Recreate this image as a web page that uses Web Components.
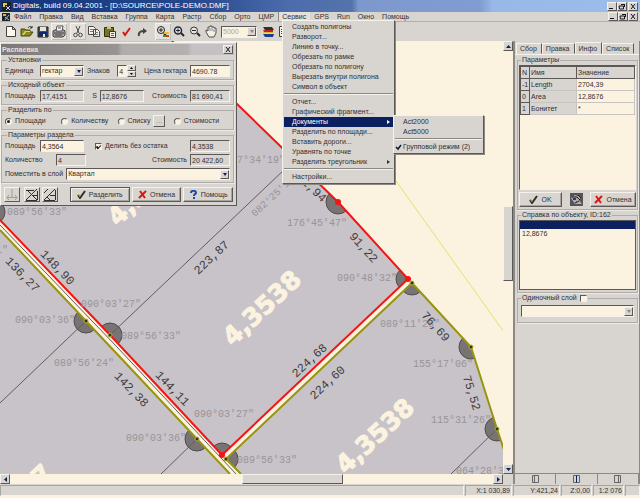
<!DOCTYPE html>
<html lang="ru">
<head>
<meta charset="utf-8">
<title>Digitals</title>
<style>
    :root {
        --face: #d8d4d0;
        --paper: #fbf3e0;
        --shade: #8c8884;
        --dark: #5c5858;
        --light: #f6f2ea;
        --navy: #0a2060;
        --ink: #303030;
    }
    body {
        margin: 0;
        height: 100vh;
        display: flex;
        flex-direction: column;
        overflow: hidden;
        background: var(--face);
        color: var(--ink);
        font: 7px/10px "Liberation Sans", Arial, sans-serif;
    }
    main {
        flex: 1;
        display: flex;
        min-height: 0;
    }
</style>
</head>
<body>

<template id="template-title-bar">
    <style>
        :host {
            display: flex;
            align-items: center;
            gap: 2px;
            height: 12px;
            padding: 0 2px;
            color: #fff;
            background: linear-gradient(90deg, #14347c 0, #24488c 30%, #4c6cac 45%, #5474ac 55%, #7c98cc 56%, #809cd0 75%, #98b8e8 77%, #9cbcec 100%);
        }
        h1 {
            flex: 1;
            margin: 0;
            font-size: 8px;
            font-weight: normal;
            white-space: nowrap;
        }
        svg { display: block; }
        div { display: flex; }
        .last { margin-left: 1px; }
    </style>
    <svg width="9" height="9" viewBox="0 0 9 9"><path fill="#182030" d="M0 0h9v9H0z"/><path fill="#e8c840" d="M1 1h4v2H3v2H1z"/><path stroke="#c8d8f0" fill="none" d="M4 4l4 4M8 4L4 8"/></svg>
    <h1><slot></slot></h1>
    <div><caption-button kind="min"></caption-button><caption-button kind="restore"></caption-button><caption-button class="last" kind="close"></caption-button></div>
</template>

<template id="template-caption-button">
    <style>
        :host { display: block; }
        button {
            display: block;
            width: 10px;
            height: 9px;
            padding: 0;
            border: 1px solid;
            border-color: var(--light) var(--dark) var(--dark) var(--light);
            background: var(--face);
        }
        svg { display: block; width: 8px; height: 7px; }
        path { fill: none; stroke: #101828; }
    </style>
    <button type="button"><svg viewBox="0 0 8 7"><path/></svg></button>
</template>

<template id="template-menu-bar">
    <style>
        :host {
            display: flex;
            align-items: center;
            height: 9px;
            padding: 0 2px;
            white-space: nowrap;
        }
        svg { display: block; }
        nav { flex: 1; display: flex; }
        button {
            height: 9px;
            padding: 0 4px;
            border: 0;
            background: none;
            color: inherit;
            font: inherit;
            line-height: 9px;
        }
        button.open {
            background: #e4e0da;
            box-shadow: inset 1px 0 var(--shade);
        }
        .windows { display: flex; }
    </style>
    <svg width="8" height="8" viewBox="0 0 8 8"><path fill="#202428" d="M0 0h8v8H0z"/><path fill="#d8b838" d="M1 1h3v2H1z"/><path stroke="#a8b8d8" fill="none" d="M3 4l4 3M7 2L3 7"/></svg>
    <nav></nav>
    <div class="windows"><caption-button kind="min"></caption-button><caption-button kind="restore"></caption-button><caption-button kind="close"></caption-button></div>
</template>

<template id="template-tool-bar">
    <style>
        :host {
            display: flex;
            align-items: center;
            height: 19px;
            padding-left: 3px;
            border-top: 1px solid #b4b0ac;
        }
        button {
            width: 16px;
            height: 17px;
            padding: 0;
            border: 0;
            background: none;
        }
        button.raised {
            background: #e4e0dc;
            box-shadow: inset 1px 1px var(--light), inset -1px -1px #c0bcb8;
        }
        svg { display: block; margin: auto; width: 14px; height: 13px; }
        .gap { width: 3px; }
        .wide { width: 5px; }
        combo-box { width: 36px; margin: 0 3px 0 2px; }
    </style>
    <button aria-label="Новый"><svg viewBox="0 0 14 13"><path fill="#fff8e8" stroke="#404040" d="M2.500 1.500h6l3 3v7h-9zM8.500 1.500v3h3"/></svg></button>
    <button aria-label="Открыть"><svg viewBox="0 0 14 13"><path fill="#8c8820" stroke="#484810" d="M1 11V4h4l1 1h4v2h3l-3 4z"/><path fill="#d8d860" d="M2 10l3-4h5v1H6l-2 3z"/><path fill="none" stroke="#303030" d="M8 3c1-2 3-2 4 0M12 1v2h-2"/></svg></button>
    <button aria-label="Сохранить"><svg viewBox="0 0 14 13"><path fill="#48504c" stroke="#202020" d="M2 2h10v10H2z"/><path fill="#0c2878" d="M3 7h8v4H3z"/><path fill="#e8e4dc" d="M4 2h6v4H4zM7 9h2v3H7z"/></svg></button>
    <button class="raised" aria-label="Печать"><svg viewBox="0 0 14 13"><path fill="#a8a4a0" stroke="#404040" d="M1 6l2-1h9l1 1v4l-2 2H2l-1-1z"/><path fill="#fff" stroke="#505050" d="M4 6l1-5h6l-1 5z"/><path stroke="#404040" d="M2 8h10M3 10h7M6 3h3"/></svg></button>
    <span class="gap"></span>
    <button class="raised" aria-label="Вырезать"><svg viewBox="0 0 14 13"><path fill="none" stroke="#484848" d="M5 1l3 7M9 1L6 8"/><circle cx="4.500" cy="10" r="1.800" fill="none" stroke="#484848"/><circle cx="9.500" cy="10" r="1.800" fill="none" stroke="#484848"/></svg></button>
    <button aria-label="Копировать"><svg viewBox="0 0 14 13"><path fill="#f4f0e8" stroke="#484848" d="M1.500 1.500h5l2 2v6h-7zM6.500 4.500h4l2 2v5h-6z"/><path stroke="#787878" d="M3 4.500h3M3 6.500h3M8 7.500h3M8 9.500h3"/></svg></button>
    <button aria-label="Вставить"><svg viewBox="0 0 14 13"><path fill="#787420" stroke="#303010" d="M1.500 2.500h9v9h-9z"/><path fill="#c8c4a0" d="M4 1h4v3H4z"/><path fill="#f4f0e8" stroke="#383838" d="M6.500 6.500h6v6h-6z"/><path stroke="#606060" d="M8 8.500h3M8 10.500h3"/></svg></button>
    <button aria-label="Применить"><svg viewBox="0 0 14 13"><path fill="none" stroke="#d81818" stroke-width="2" d="M4 7l2 3 5-7"/></svg></button>
    <button aria-label="Отменить"><svg viewBox="0 0 14 13"><path fill="none" stroke="#484848" stroke-width="2" d="M4 11C3 7 6 6 9 6"/><path fill="#404040" d="M8 3l4 3-4 3z"/></svg></button>
    <span class="wide"></span>
    <button class="raised" aria-label="Масштаб"><svg viewBox="0 0 14 13"><circle cx="5" cy="5" r="3.500" fill="#e8e4dc" stroke="#202020"/><path stroke="#202020" stroke-width="2" d="M8 8l2 3"/><path stroke="#202020" d="M3 5h4M5 3v4"/><path fill="#e8c030" d="M8 7h5v2H8z"/><path fill="#c84020" d="M10 10h3v2h-3z"/><path fill="#409030" d="M7 10h3v2H7z"/></svg></button>
    <button aria-label="Увеличить"><svg viewBox="0 0 14 13"><circle cx="6" cy="5.500" r="3.500" fill="#e8e4dc" stroke="#202838" stroke-width="1.500"/><path stroke="#202838" stroke-width="2" d="M9 8l3 3"/><path stroke="#202838" d="M4 5.500h4M6 3.500v4"/></svg></button>
    <button aria-label="Уменьшить"><svg viewBox="0 0 14 13"><circle cx="6" cy="5.500" r="3.500" fill="#e8e4dc" stroke="#383838"/><path stroke="#282828" stroke-width="2" d="M9 8l3 3"/><path stroke="#282828" d="M4 5.500h4"/></svg></button>
    <button aria-label="Рука"><svg viewBox="0 0 14 13"><path fill="#f4f0e8" stroke="#505050" d="M5 12L2 7V5l2 1V2h2V1h2v1h2v1h2v5l-2 4z"/><path stroke="#888" d="M6 3v3M8 2v4M10 4v3"/></svg></button>
    <combo-box options="5000" dim></combo-box>
    <button aria-label="Слои"><svg viewBox="0 0 14 13"><path fill="#303030" d="M2 2h9l2 3H4z"/><path fill="#b82820" d="M2 5h10v2H3z"/><path fill="#e0b830" d="M2 7h10v1H3z"/><path fill="#1c3c90" d="M2 9h11l-1 3H4z"/></svg></button>
    <button aria-label="Таблица"><svg viewBox="0 0 14 13"><path fill="#f4f0e8" stroke="#404040" d="M2.500 1.500h10v10h-10z"/><path stroke="#404040" d="M4 4.500h6M4 6.500h6M4 8.500h6"/></svg></button>
</template>

<template id="template-combo-box">
    <style>
        :host { display: grid; align-items: stretch; min-width: 0; }
        select, i { grid-area: 1 / 1; }
        select {
            appearance: none;
            width: 100%;
            min-width: 0;
            height: 12px;
            padding: 0 0 0 1px;
            border: 1px solid;
            border-color: var(--dark) var(--light) var(--light) var(--dark);
            border-radius: 0;
            background: var(--paper);
            color: inherit;
            font: inherit;
        }
        :host([dim]) select { color: #a8a49c; }
        i {
            justify-self: end;
            align-self: center;
            display: grid;
            place-items: center;
            width: 9px;
            height: 9px;
            margin-right: 1px;
            box-sizing: border-box;
            border: 1px solid;
            border-color: var(--light) var(--dark) var(--dark) var(--light);
            background: var(--face);
            pointer-events: none;
        }
        i::after {
            content: "";
            border: 2px solid transparent;
            border-top: 3px solid var(--navy);
            border-bottom: 0;
        }
        :host([dim]) i::after { border-top-color: var(--shade); }
    </style>
    <select></select><i></i>
</template>

<template id="template-push-button">
    <style>
        :host { display: block; }
        button {
            display: flex;
            align-items: center;
            justify-content: center;
            gap: 3px;
            width: 100%;
            height: 15px;
            padding: 0;
            border: 1px solid;
            border-color: var(--light) var(--dark) var(--dark) var(--light);
            background: var(--face);
            box-shadow: inset -1px -1px #a8a4a0;
            color: inherit;
            font: inherit;
            white-space: nowrap;
        }
        :host([default]) button { border-color: var(--dark); box-shadow: inset 1px 1px var(--light), inset -1px -1px #a8a4a0; }
        svg { display: block; width: 9px; height: 9px; }
    </style>
    <button type="button"><svg viewBox="0 0 9 9"></svg><slot></slot></button>
</template>

<template id="template-group-box">
    <style>
        :host { display: block; }
        fieldset {
            display: block;
            min-width: 0;
            margin: 0;
            padding: 1px var(--group-pad, 3px) 2px;
            border: 1px solid #b0acac;
            box-shadow: 1px 1px #ece8e2;
        }
        legend {
            margin: 0 0 0 2px;
            padding: 0 1px;
            line-height: 8px;
        }
    </style>
    <fieldset><legend><slot name="legend"></slot></legend><slot></slot></fieldset>
</template>

<template id="template-parcel-dialog">
    <style>
        :host {
            display: flex;
            flex-direction: column;
            gap: 1px;
            box-sizing: border-box;
            padding: 1px 2px 3px 0;
            background: var(--face);
            border: 1px solid;
            border-color: var(--light) var(--dark) var(--dark) var(--light);
        }
        header {
            display: flex;
            align-items: center;
            height: 11px;
            padding: 0 1px;
            color: #e4e0dc;
            background: linear-gradient(90deg, #7c7878 0, #989494 50%, #b0acac 52%, #b4b0b0 80%, #c4c0c4 82%);
        }
        h2 { flex: 1; margin: 0; font-size: 7px; }
        .row { display: flex; align-items: center; gap: 3px; height: 12px; white-space: nowrap; }
        .row + .row { margin-top: 2px; }
        .end { margin-left: auto; }
        .lead { width: 32px; }
        input[type=text], input[type=number] {
            box-sizing: border-box;
            width: 40px;
            height: 12px;
            padding: 0 1px;
            border: 1px solid;
            border-color: var(--dark) var(--light) var(--light) var(--dark);
            border-radius: 0;
            background: var(--paper);
            color: inherit;
            font: inherit;
        }
        input[readonly] { background: var(--face) !important; }
        input.mid { width: 44px; }
        input.small { width: 30px; }
        .count { width: 48px; }
        .spin { display: flex; align-items: center; }
        input[type=number] { width: 10px; appearance: textfield; }
        input::-webkit-inner-spin-button { display: none; }
        .arrows { display: grid; }
        .arrows button {
            display: grid;
            place-items: center;
            width: 9px;
            height: 6px;
            padding: 0;
            border: 1px solid;
            border-color: var(--light) var(--dark) var(--dark) var(--light);
            background: var(--face);
        }
        .arrows svg { display: block; width: 3px; height: 2px; }
        .unit { width: 44px; }
        .layer { flex: 1; }
        .choice { display: flex; align-items: center; gap: 3px; }
        .whole { margin-left: 8px; }
        .radios { display: grid; grid-template-columns: repeat(4, 1fr); gap: 0; }
        input[type=radio], input[type=checkbox] {
            appearance: none;
            display: grid;
            place-items: center;
            width: 7px;
            height: 7px;
            margin: 0;
            border: 1px solid;
            border-color: var(--dark) var(--light) var(--light) var(--dark);
            background: var(--paper);
            box-sizing: border-box;
        }
        input[type=radio] { border-radius: 50%; }
        input[type=radio]:checked::after { content: ""; width: 3px; height: 3px; border-radius: 50%; background: #202020; }
        input[type=checkbox]:checked::after { content: ""; width: 3px; height: 2px; border: solid #202020; border-width: 0 0 1px 2px; transform: rotate(-45deg); }
        .more { width: 12px; height: 12px; padding: 0; border: 1px solid; border-color: var(--light) var(--dark) var(--dark) var(--light); background: var(--face); color: var(--shade); font: inherit; line-height: 6px; }
        footer { display: flex; gap: 2px; padding: 3px 1px 0 3px; }
        footer .tool { width: 16px; height: 15px; padding: 0; border: 1px solid; border-color: var(--light) var(--dark) var(--dark) var(--light); background: var(--face); }
        footer .tool svg { display: block; width: 14px; height: 13px; }
        footer .first { margin-right: 2px; }
        .main { flex: 6; margin-left: 10px; }
        .side { flex: 5; }
    </style>
    <header><h2>Распаевка</h2><caption-button kind="close"></caption-button></header>
    <group-box>
        <span slot="legend">Установки</span>
        <div class="row">
            <span class="lead">Единица</span>
            <combo-box class="unit" options="гектар"></combo-box>
            <label for="digits">Знаков</label>
            <span class="spin end"><input type="number" id="digits" value="4"><span class="arrows"><button type="button" aria-label="Больше"><svg viewBox="0 0 3 2"><path d="M0 2h3L1.500 0z"/></svg></button><button type="button" aria-label="Меньше"><svg viewBox="0 0 3 2"><path d="M0 0h3L1.500 2z"/></svg></button></span></span>
            <label class="end" for="price">Цена гектара</label>
            <input type="text" id="price" value="4690.78">
        </div>
    </group-box>
    <group-box>
        <span slot="legend">Исходный объект</span>
        <div class="row">
            <label class="lead" for="area">Площадь</label>
            <input type="text" class="mid" id="area" value="17,4151" readonly>
            <label class="end" for="s">S</label>
            <input type="text" class="mid" id="s" value="12,8676" readonly>
            <label class="end" for="cost">Стоимость</label>
            <input type="text" id="cost" value="81 690,41" readonly>
        </div>
    </group-box>
    <group-box>
        <span slot="legend">Разделить по</span>
        <div class="row radios">
            <label class="choice"><input type="radio" name="by" checked>Площади</label>
            <label class="choice"><input type="radio" name="by">Количеству</label>
            <span class="choice"><label class="choice"><input type="radio" name="by">Списку</label><button type="button" class="more">...</button></span>
            <label class="choice"><input type="radio" name="by">Стоимости</label>
        </div>
    </group-box>
    <group-box>
        <span slot="legend">Параметры раздела</span>
        <div class="row">
            <label class="lead" for="part">Площадь</label>
            <input type="text" class="mid" id="part" value="4,3564">
            <label class="choice whole"><input type="checkbox" checked>Делить без остатка</label>
            <input type="text" class="end" value="4,3538" aria-label="Площадь участка" readonly>
        </div>
        <div class="row">
            <label class="count" for="count">Количество</label>
            <input type="text" class="small" id="count" value="4" readonly>
            <label class="end" for="total">Стоимость</label>
            <input type="text" id="total" value="20 422,60" readonly>
        </div>
        <div class="row">
            <span>Поместить в слой</span>
            <combo-box class="layer" options="Квартал"></combo-box>
        </div>
    </group-box>
    <footer>
        <button type="button" class="tool first" aria-label="Точка"><svg viewBox="0 0 14 13"><path fill="none" stroke="#a09c98" d="M7 1v8M2 9.500h10M4 7L2 9.500 4 12M10 7l2 2.500-2 2.500"/></svg></button>
        <button type="button" class="tool" aria-label="Сетка"><svg viewBox="0 0 14 13"><path fill="none" stroke="#303030" d="M1 2.500h8M1 12L12 1M3 3l9 9M12.500 3v9M7 7.500h5M1 12.500h11"/></svg></button>
        <button type="button" class="tool" aria-label="Полосы"><svg viewBox="0 0 14 13"><path fill="none" stroke="#303030" d="M1 5l4-4M1 12L12 1M12.500 2v10M7 7.500h5M4 9l3 3M1 12.500h11"/></svg></button>
        <push-button class="main" icon="check" default>Разделить</push-button>
        <push-button class="side" icon="cross">Отмена</push-button>
        <push-button class="side" icon="help">Помощь</push-button>
    </footer>
</template>

<template id="template-drop-menu">
    <style>
        :host {
            display: block;
            box-sizing: border-box;
            padding: 1px;
            background: var(--face);
            border: 1px solid;
            border-color: var(--light) var(--dark) var(--dark) var(--light);
            box-shadow: 1px 1px var(--shade);
            white-space: nowrap;
        }
    </style>
    <slot></slot>
</template>

<template id="template-menu-item">
    <style>
        :host { display: block; position: relative; }
        button {
            display: flex;
            align-items: center;
            width: 100%;
            height: 10px;
            padding: 0 3px 0 0;
            border: 0;
            background: none;
            color: inherit;
            font: inherit;
            text-align: left;
        }
        :host([active]) button { background: var(--navy); color: #fff; }
        svg { display: block; width: 8px; height: 7px; visibility: hidden; fill: none; stroke: #101828; }
        span { flex: 1; }
        :host([checked]) svg { visibility: visible; }
        b { display: none; border: 2px solid transparent; border-left: 3px solid currentColor; border-right: 0; }
        :host([more]) b { display: block; }
        ::slotted(drop-menu) { position: absolute; left: 100%; top: -2px; width: 91px; color: var(--ink); }
    </style>
    <button type="button"><svg viewBox="0 0 8 7"><path stroke-width="1.500" d="M1 3l2 2 3-4"/></svg><span></span><b></b></button>
    <slot></slot>
</template>

<template id="template-menu-line">
    <style>
        :host { display: block; height: 5px; padding-top: 1px; box-sizing: border-box; }
        hr { margin: 0; border: 0; border-top: 1px solid var(--shade); border-bottom: 1px solid var(--light); }
    </style>
    <hr>
</template>

<template id="template-scroll-strip">
    <style>
        :host { display: flex; background: var(--paper); }
        :host([vertical]) { flex-direction: column; }
        button {
            flex: none;
            display: grid;
            place-items: center;
            width: 10px;
            height: 10px;
            padding: 0;
            border: 1px solid;
            border-color: var(--light) var(--dark) var(--dark) var(--light);
            background: var(--face);
        }
        svg { width: 5px; height: 5px; fill: var(--navy); }
        .thumb {
            box-sizing: border-box;
            border: 1px solid;
            border-color: var(--light) var(--dark) var(--dark) var(--light);
            background: var(--face);
        }
    </style>
    <button type="button" aria-label="Назад"><svg viewBox="0 0 5 5"><path/></svg></button>
    <span class="before"></span><span class="thumb"></span><span class="after"></span>
    <button type="button" aria-label="Вперёд"><svg viewBox="0 0 5 5"><path/></svg></button>
</template>

<template id="template-parcel-map">
    <style>
        :host { display: block; overflow: hidden; background: var(--paper); }
        svg { display: block; width: 100%; height: 100%; }
        .ground { fill: #c8c3c8; }
        .fan { fill: #787474; stroke: #504c50; }
        .road { fill: var(--paper); }
        .edge { fill: none; stroke: #989410; stroke-width: 2; }
        .chosen { fill: none; stroke: #f41414; stroke-width: 2; }
        .thin { fill: none; stroke: #605c60; }
        .length { font: 12px "Liberation Mono", monospace; fill: #403c40; text-anchor: middle; dominant-baseline: central; }
        .angle { font: 10px "Liberation Mono", monospace; fill: #989498; }
        .area { font: bold 25px "DejaVu Sans", sans-serif; fill: var(--paper); stroke: var(--paper); text-anchor: middle; dominant-baseline: central; }
    </style>
    <svg>
        <defs>
            <clipPath id="upper"><path d="M0 41H172L338 202 408 279 222 455 110 335 0 220z"/></clipPath>
            <clipPath id="right"><path d="M412 283L471 347 497 429 510 474H241L226 459z"/></clipPath>
            <clipPath id="left"><path d="M0 230L86 321 197 439 230 474H0z"/></clipPath>
        </defs>
        <!-- the drawing keeps window coordinates, the bars above take 41px -->
        <g transform="translate(0 -41)">
            <path class="ground" d="M0 41H172L338 202 412 283 471 347 497 429 510 474V900H0z"/>
            <g class="fans"></g>
            <path class="thin" d="M110 335L286 168M86 321L0 403M197 439L161 474M497 429L451 474"/>
            <path class="road" d="M0 220L110 335 222 455 408 279 412 283 226 459 241 474H230L197 439 86 321 0 230z"/>
            <path class="thin" d="M0 225L117 347 236 474"/>
            <path class="edge" d="M0 230L86 321 197 439 230 474M241 474L226 459 412 283 471 347 497 429 504 450"/>
            <path class="chosen" d="M172 41L338 202 408 279 222 455 110 335 0 220"/>
            <path fill="none" stroke="#e4e070" d="M396 181L504 332"/>
            <g class="nodes"></g>
            <g class="labels"></g>
        </g>
    </svg>
</template>

<template id="template-map-pane">
    <style>
        :host {
            flex: 1;
            position: relative;
            display: grid;
            grid-template: minmax(0, 1fr) 10px / minmax(0, 1fr) 10px;
            min-width: 0;
            border-right: 2px solid var(--shade);
        }
    </style>
    <parcel-map></parcel-map>
    <scroll-strip vertical before="156" thumb="73" after="184"></scroll-strip>
    <scroll-strip before="233" thumb="99" after="151"></scroll-strip>
    <slot></slot>
</template>

<template id="template-side-panel">
    <style>
        :host {
            flex: none;
            width: 125px;
            box-sizing: border-box;
            display: flex;
            flex-direction: column;
            border-right: 1px solid var(--shade);
            --group-pad: 1px;
        }
        nav { display: flex; align-items: flex-end; height: 13px; padding-left: 1px; }
        nav button {
            height: 11px;
            padding: 0 4px 0 3px;
            border: 1px solid;
            border-color: var(--light) var(--dark) transparent var(--light);
            background: var(--face);
            color: inherit;
            font: inherit;
            line-height: 9px;
        }
        nav button.on { height: 12px; }
        .page { flex: 1; padding: 1px 1px 0 2px; border-top: 1px solid var(--light); }
        group-box + group-box { margin-top: 1px; }
        .grid { height: 123px; border: 1px solid; border-color: var(--dark) var(--light) var(--light) var(--dark); background: var(--paper); }
        table { width: 100%; border-collapse: collapse; table-layout: fixed; }
        th, td {
            height: 11px;
            padding: 0 0 0 1px;
            border: 1px solid #c8c4c4;
            text-align: left;
            font-weight: normal;
            line-height: 11px;
            white-space: nowrap;
        }
        th { background: var(--face); }
        thead th, tbody th:first-child { border-color: var(--dark); }
        .n { width: 7px; }
        .name { width: 45px; }
        .buttons { display: flex; align-items: center; justify-content: space-between; margin-top: 2px; }
        .ok { width: 43px; }
        .no { width: 46px; }
        .pic { width: 13px; height: 13px; padding: 0; border: 0; }
        .pic svg { display: block; }
        ul { height: 68px; margin: 0; padding: 0; list-style: none; border: 1px solid; border-color: var(--dark); background: var(--paper); }
        li { height: 8px; padding: 0 2px; line-height: 8px; }
        li + li { height: 10px; line-height: 10px; }
        li.on { background: var(--navy); }
        .single { display: flex; align-items: center; gap: 3px; line-height: 8px; }
        .single input { appearance: none; box-sizing: border-box; width: 7px; height: 7px; margin: 0; border: 1px solid; border-color: var(--dark) var(--light) var(--light) var(--dark); background: var(--paper); }
        .pick { margin: 2px 2px 3px; }
        footer { display: grid; grid-template-columns: repeat(3, 1fr); border-top: 1px solid var(--shade); }
        footer button { height: 10px; padding: 0; border: 0; border-right: 1px solid var(--shade); background: var(--face); }
        footer svg { display: block; margin: auto; fill: none; stroke: #686464; }
    </style>
    <nav><button type="button">Сбор</button><button type="button">Правка</button><button type="button" class="on">Инфо</button><button type="button">Список</button></nav>
    <div class="page">
        <group-box>
            <span slot="legend">Параметры</span>
            <div class="grid">
                <table>
                    <thead><tr><th class="n">N</th><th class="name">Имя</th><th>Значение</th></tr></thead>
                    <tbody>
                        <tr><th>-1</th><th>Length</th><td>2704,39</td></tr>
                        <tr><th>0</th><th>Area</th><td>12,8676</td></tr>
                        <tr><th>1</th><th>Бонитет</th><td>*</td></tr>
                    </tbody>
                </table>
            </div>
            <div class="buttons">
                <push-button class="ok" icon="check">OK</push-button>
                <button type="button" class="pic" aria-label="Снимок"><svg width="13" height="13" viewBox="0 0 13 13"><path fill="#585454" d="M0 0h13v13H0z"/><path fill="#b0acac" d="M1 5l4-3 6 2-2 3 3 4H5L3 8z"/><path stroke="#181818" fill="none" d="M2 4h5l3 3M8 2l3 3M5 10l4-2"/><path fill="#1c3c90" d="M3 5h3v2H3z"/><path fill="#c83028" d="M6 8h2v1H6z"/></svg></button>
                <push-button class="no" icon="cross">Отмена</push-button>
            </div>
        </group-box>
        <group-box>
            <span slot="legend">Справка по объекту, ID:162</span>
            <ul><li class="on"></li><li>12,8676</li></ul>
        </group-box>
        <group-box>
            <label slot="legend" class="single">Одиночный слой <input type="checkbox"></label>
            <combo-box class="pick" options="" dim></combo-box>
        </group-box>
    </div>
    <footer>
        <button type="button" aria-label="Слева"><svg width="9" height="8" viewBox="0 0 9 8"><path d="M1.500.500h6v7h-6zM3.500.500v7"/></svg></button>
        <button type="button" aria-label="Центр"><svg width="9" height="8" viewBox="0 0 9 8"><path d="M1.500.500h6v7h-6z"/><path stroke="#0a2060" d="M4.500.500v7"/></svg></button>
        <button type="button" aria-label="Справа"><svg width="9" height="8" viewBox="0 0 9 8"><path d="M1.500.500h6v7h-6zM5.500.500v7"/></svg></button>
    </footer>
</template>

<template id="template-status-bar">
    <style>
        :host {
            display: flex;
            gap: 1px;
            height: 11px;
            padding-top: 1px;
            border-bottom: 2px solid var(--paper);
            white-space: nowrap;
        }
        ::slotted(span) {
            box-sizing: border-box;
            width: 31px;
            padding-right: 1px;
            border: 1px solid;
            border-color: #a8a4a0 var(--light) var(--light) #a8a4a0;
            line-height: 9px;
            text-align: right;
        }
        ::slotted(.fill) { flex: 1; }
        ::slotted(.wide) { width: 47px; }
        ::slotted(.tail) { width: 15px; }
    </style>
    <slot></slot>
</template>

<title-bar>Digitals, build 09.04.2001 - [D:\SOURCE\POLE-DEMO.DMF]</title-bar>
<menu-bar items="Файл,Правка,Вид,Вставка,Группа,Карта,Растр,Сбор,Орто,ЦМР,Сервис,GPS,Run,Окно,Помощь" open="Сервис"></menu-bar>
<tool-bar></tool-bar>
<main>
    <map-pane>
        <parcel-dialog style="position: absolute; left: 0; top: 1px; width: 237px"></parcel-dialog>
        <drop-menu style="position: absolute; left: 282px; top: -21px; width: 113px">
            <menu-item text="Создать полигоны"></menu-item>
            <menu-item text="Разворот..."></menu-item>
            <menu-item text="Линию в точку..."></menu-item>
            <menu-item text="Обрезать по рамке"></menu-item>
            <menu-item text="Обрезать по полигону"></menu-item>
            <menu-item text="Вырезать внутри полигона"></menu-item>
            <menu-item text="Символ в объект"></menu-item>
            <menu-line></menu-line>
            <menu-item text="Отчет..."></menu-item>
            <menu-item text="Графический фрагмент..."></menu-item>
            <menu-item text="Документы" active more>
                <drop-menu>
                    <menu-item text="Act2000"></menu-item>
                    <menu-item text="Act5000"></menu-item>
                    <menu-line></menu-line>
                    <menu-item text="Групповой режим (2)" checked></menu-item>
                </drop-menu>
            </menu-item>
            <menu-item text="Разделить по площади..."></menu-item>
            <menu-item text="Вставить дороги..."></menu-item>
            <menu-item text="Уравнять по точке"></menu-item>
            <menu-item text="Разделить треугольник" more></menu-item>
            <menu-line></menu-line>
            <menu-item text="Настройки..."></menu-item>
        </drop-menu>
    </map-pane>
    <side-panel></side-panel>
</main>
<status-bar><span class="fill"></span><span class="wide">X:1 030,89</span><span class="wide">Y:421,24</span><span>Z:0,00</span><span>1:2 076</span><span class="tail"></span></status-bar>

<script>
    (function (owner) {
        const SVG = 'http://www.w3.org/2000/svg'

        class TemplateElement extends HTMLElement {
            constructor() {
                super()
                const template = owner.querySelector('#template-' + this.localName).content
                this.attachShadow({ mode: 'open' }).appendChild(template.cloneNode(true))
            }
            find(selector) {
                return this.shadowRoot.querySelector(selector)
            }
        }

        class CaptionButton extends TemplateElement {
            connectedCallback() {
                const shapes = {
                    min: 'M1 5.500h4',
                    restore: 'M3 1.500h4M3.500 1v1M6.500 1v3M1 3h4.500v3h-4z',
                    close: 'M2 1l4 5M6 1L2 6'
                }
                const kind = this.getAttribute('kind')
                this.find('path').setAttribute('d', shapes[kind])
                this.find('button').setAttribute('aria-label', kind)
            }
        }

        class MenuBar extends TemplateElement {
            connectedCallback() {
                const nav = this.find('nav')
                for (const item of this.getAttribute('items').split(',')) {
                    const button = owner.createElement('button')
                    button.type = 'button'
                    button.textContent = item
                    button.classList.toggle('open', item == this.getAttribute('open'))
                    nav.appendChild(button)
                }
            }
        }

        class ComboBox extends TemplateElement {
            connectedCallback() {
                const select = this.find('select')
                for (const text of this.getAttribute('options').split(',')) {
                    select.add(new Option(text))
                }
            }
        }

        class PushButton extends TemplateElement {
            connectedCallback() {
                const icons = {
                    check: '<path fill="none" stroke="#303020" stroke-width="2" d="M1 5l2 3 5-7"/><path fill="none" stroke="#a8a420" d="M1 4l2 3"/>',
                    cross: '<path fill="none" stroke="#d81818" stroke-width="2" d="M2 1l5 7M8 1L1 8"/>',
                    help: '<path fill="none" stroke="#1c4cb0" stroke-width="2" d="M2 3c0-3 5-3 5 0 0 1-2 1-2 3M5 7v2"/>'
                }
                this.find('svg').innerHTML = icons[this.getAttribute('icon')]
            }
        }

        class MenuItem extends TemplateElement {
            connectedCallback() {
                this.find('span').textContent = this.getAttribute('text')
            }
        }

        class ScrollStrip extends TemplateElement {
            connectedCallback() {
                for (const part of ['before', 'thumb', 'after']) {
                    this.find('.' + part).style.flex = this.getAttribute(part) + ' 0 0'
                }
                const arrows = this.hasAttribute('vertical')
                    ? ['M0 4h5L2.500 1z', 'M0 1h5L2.500 4z']
                    : ['M4 0v5L1 2.500z', 'M1 0v5l3-2.500z']
                this.shadowRoot.querySelectorAll('path').forEach((path, i) => path.setAttribute('d', arrows[i]))
            }
        }

        class ParcelMap extends TemplateElement {
            connectedCallback() {
                const fans = [
                    ['upper', 338, 202], ['upper', 408, 279], ['upper', 110, 335], ['upper', 222, 455], ['upper', -7, 212],
                    ['right', 412, 283], ['right', 471, 347], ['right', 497, 429], ['right', 226, 459],
                    ['left', 86, 321], ['left', 197, 439]
                ]
                for (const [part, cx, cy] of fans) {
                    const group = this.add('.fans', 'g', { 'clip-path': `url(#${part})` })
                    group.appendChild(this.make('circle', { class: 'fan', cx, cy, r: 12 }))
                }
                for (const [cx, cy] of [[412, 283], [471, 347], [497, 429], [226, 459], [86, 321], [197, 439], [110, 335]]) {
                    this.add('.nodes', 'circle', { cx, cy, r: 2, fill: '#303020', stroke: '#b8b420' })
                }
                for (const [cx, cy] of [[338, 202], [408, 279], [222, 455]]) {
                    this.add('.nodes', 'circle', { cx, cy, r: 3, fill: '#f41414' })
                }

                const lengths = [
                    ['148,90', 57, 268, 46], ['136,27', 22, 275, 46], ['142,38', 131, 390, 46], ['144,11', 172, 389, 46],
                    ['223,87', 212, 258, -43], ['224,68', 310, 361, -43], ['224,60', 328, 383, -43],
                    ['82,94', 311, 188, 44], ['91,22', 363, 248, 48], ['76,69', 435, 327, 48], ['75,52', 471, 393, 73]
                ]
                const areas = [['4,3538', 262, 308, -43], ['4,3538', 375, 436, -43], ['4,3538', 147, 188, -43], ['4,3547', 13, 502, -43]]
                const angles = [
                    ['089°56\'33"', 7, 215], ['090°03\'31"', -52, 253], ['090°03\'27"', 81, 307], ['090°03\'36"', 15, 323],
                    ['089°56\'33"', 121, 339], ['089°56\'24"', 54, 366], ['090°03\'27"', 194, 417], ['090°03\'36"', 126, 441],
                    ['089°56\'33"', 237, 463], ['176°45\'47"', 287, 226], ['090°48\'32"', 337, 281], ['089°11\'28"', 380, 327],
                    ['155°17\'06"', 413, 367], ['115°31\'26"', 431, 423], ['064°28\'32"', 456, 474], ['177°34\'19"', 225, 163],
                    ['082°25\'12"', 255, 217, -43]
                ]
                angles.forEach(label => this.label('angle', label))
                areas.forEach(label => this.label('area', label))
                lengths.forEach(label => this.label('length', label))
            }
            make(name, attributes) {
                const node = owner.createElementNS(SVG, name)
                for (const key in attributes) {
                    node.setAttribute(key, attributes[key])
                }
                return node
            }
            add(selector, name, attributes) {
                return this.find(selector).appendChild(this.make(name, attributes))
            }
            label(kind, [text, x, y, turn = 0]) {
                this.add('.labels', 'text', { class: kind, transform: `translate(${x} ${y}) rotate(${turn})` }).textContent = text
            }
        }

        customElements.define('caption-button', CaptionButton)
        customElements.define('combo-box', ComboBox)
        customElements.define('push-button', PushButton)
        customElements.define('menu-bar', MenuBar)
        customElements.define('menu-item', MenuItem)
        customElements.define('scroll-strip', ScrollStrip)
        customElements.define('parcel-map', ParcelMap)
        for (const name of ['title-bar', 'tool-bar', 'group-box', 'drop-menu', 'menu-line', 'parcel-dialog', 'map-pane', 'side-panel', 'status-bar']) {
            customElements.define(name, class extends TemplateElement {})
        }
    })(document)
</script>
</body>
</html>
